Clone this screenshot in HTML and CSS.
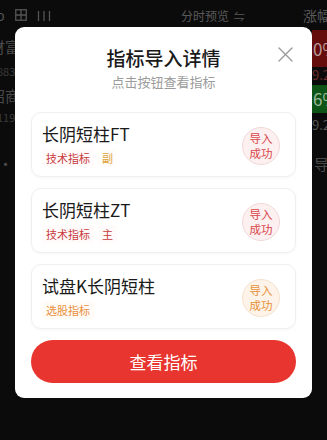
FILE: index.html
```html
<!DOCTYPE html>
<html lang="zh">
<head>
<meta charset="utf-8">
<link rel="stylesheet" href="styles.css">
</head>
<body>
<div class="screen">
  <div class="topbar">
    <div class="tb-left">
      <span class="glyph-c">ɔ</span>
      <svg class="ic-grid" width="12" height="12" viewBox="0 0 12 12"><rect x="0.75" y="0.75" width="10.5" height="10.5" fill="none" stroke="#555" stroke-width="1.3"/><path d="M6 1v10M1 6h10" stroke="#555" stroke-width="1.3"/></svg>
      <svg class="ic-bars" width="14" height="12" viewBox="0 0 14 12"><path d="M1.5 2v10M7 2v10M12.5 2v10" stroke="#555" stroke-width="1.3"/></svg>
    </div>
    <div class="tb-mid">分时预览 <span class="swap">⇋</span></div>
    <div class="tb-right">涨幅</div>
  </div>
  <div class="row r1">
    <div class="left"><div class="name">财富</div><div class="code">883</div></div>
    <div class="right"><div class="pct red">0%</div><div class="price red-t">9.2</div></div>
  </div>
  <div class="row r2">
    <div class="left"><div class="name">招商</div><div class="code">119</div></div>
    <div class="right"><div class="pct green">6%</div><div class="price">9.2</div></div>
  </div>
  <div class="row r3">
    <div class="left"><div class="name">· 沾</div></div>
    <div class="right"><div class="name">导入</div></div>
  </div>
</div>

<div class="modal">
  <svg class="close" width="15" height="15" viewBox="0 0 15 15"><path d="M1 1L14 14M14 1L1 14" stroke="#9a9a9a" stroke-width="1.4" stroke-linecap="round"/></svg>
  <h1 class="title">指标导入详情</h1>
  <p class="subtitle">点击按钮查看指标</p>
  <div class="cards">
    <div class="card">
      <div class="card-info">
        <div class="card-title">长阴短柱FT</div>
        <div class="tags"><span class="tag tag-red">技术指标</span><span class="tag tag-gold">副</span></div>
      </div>
      <div class="badge badge-red">导入<br>成功</div>
    </div>
    <div class="card">
      <div class="card-info">
        <div class="card-title">长阴短柱ZT</div>
        <div class="tags"><span class="tag tag-red">技术指标</span><span class="tag tag-red">主</span></div>
      </div>
      <div class="badge badge-red">导入<br>成功</div>
    </div>
    <div class="card">
      <div class="card-info">
        <div class="card-title">试盘K长阴短柱</div>
        <div class="tags"><span class="tag tag-orange">选股指标</span></div>
      </div>
      <div class="badge badge-orange">导入<br>成功</div>
    </div>
  </div>
  <button class="btn">查看指标</button>
</div>
</body>
</html>
```
FILE: styles.css
```css
* { box-sizing: border-box; }
html, body { margin: 0; padding: 0; }
body {
  width: 327px;
  height: 440px;
  overflow: hidden;
  background: #0b0b0b;
  font-family: "Noto Sans CJK SC", "Noto Sans", sans-serif;
  position: relative;
}
.screen { width: 327px; height: 440px; overflow: hidden; }
.topbar {
  height: 30px;
  display: flex;
  align-items: center;
  color: #5a5a5a;
  font-size: 12px;
}
.tb-left {
  flex: none;
  width: 183px;
  display: flex;
  align-items: center;
  margin-left: -2px;
}
.glyph-c { font-size: 14px; width: 17px; color: #555; }
.ic-grid { margin-right: 10px; }
.tb-mid { flex: none; width: 122px; font-size: 12px; }
.swap { margin-left: 2px; font-size: 11px; }
.tb-right { flex: none; font-size: 14px; white-space: nowrap; }

.row { display: flex; justify-content: space-between; }
.left { margin-left: -10px; }
.name { font-size: 15px; line-height: 20px; color: #4a4a4a; white-space: nowrap; }
.code { font-size: 11px; line-height: 14px; color: #3a3a3a; margin-left: 7px; }
.right { width: 40px; margin-right: -25px; }
.pct { font-size: 17px; padding-left: 1px; color: #b89a9a; }
.pct.red { background: #650c0c; height: 37px; line-height: 37px; }
.pct.green { background: #0e5417; height: 28px; line-height: 28px; color: #9ab89a; margin-top: 1px; }
.price { font-size: 13px; line-height: 16px; color: #555; }
.price.red-t { color: #6e2a2a; }
.r1 { height: 54px; }
.r1 .left { padding-top: 7px; }
.r1 .code { margin-top: 7px; }
.r2 { height: 50px; }
.r2 .left { padding-top: 2px; }
.r2 .code { margin-top: 4px; }
.r2 .price { margin-top: 4px; }
.r3 { padding-top: 20px; }
.r3 .left { margin-left: -2px; }
.r3 .right .name { margin-left: 2px; }

.modal {
  position: fixed;
  top: 27px;
  left: 15px;
  width: 297px;
  height: 371px;
  background: #fff;
  border-radius: 9px;
  padding: 18px 16px 15px;
}
.close { position: absolute; top: 20px; right: 19px; }
.title {
  margin: 0;
  text-align: center;
  font-size: 19px;
  line-height: 26px;
  font-weight: 500;
  color: #1a1a1a;
}
.subtitle {
  margin: 2px 0 0;
  text-align: center;
  font-size: 13px;
  line-height: 18px;
  color: #9b9b9b;
}
.cards {
  margin-top: 21px;
  display: flex;
  flex-direction: column;
  gap: 11px;
}
.card {
  height: 65px;
  border: 1px solid #f0eeee;
  border-radius: 10px;
  box-shadow: 0 1px 3px rgba(0,0,0,0.04);
  display: flex;
  align-items: center;
  justify-content: space-between;
  padding: 0 15px 0 10px;
}
.card-info { display: flex; flex-direction: column; padding-top: 1px; }
.card-title { font-size: 17px; line-height: 22px; color: #1a1a1a; }
.tags { display: flex; gap: 4px; margin-top: 4px; }
.tag { font-size: 11px; line-height: 18px; padding: 0 4px; border-radius: 2px; }
.tag-red { color: #c9383c; background: #fffbfb; }
.tag-gold { color: #e0a23a; background: #fffdf9; }
.tag-orange { color: #e98f3a; background: #fffcf8; }
.badge {
  width: 38px;
  height: 38px;
  border-radius: 50%;
  display: flex;
  align-items: center;
  justify-content: center;
  text-align: center;
  font-size: 11.5px;
  line-height: 15px;
  margin-top: 3px;
}
.badge-red { background: #fcf0f0; border: 1px solid #f1d8d8; color: #d9474b; }
.badge-orange { background: #fdf3e8; border: 1px solid #f5e2cc; color: #e8913a; }
.btn {
  display: block;
  width: 100%;
  height: 43px;
  margin-top: 11px;
  border: none;
  border-radius: 22px;
  background: #e8352f;
  color: #fff;
  font-family: inherit;
  font-size: 17px;
  padding: 0;
}
```
